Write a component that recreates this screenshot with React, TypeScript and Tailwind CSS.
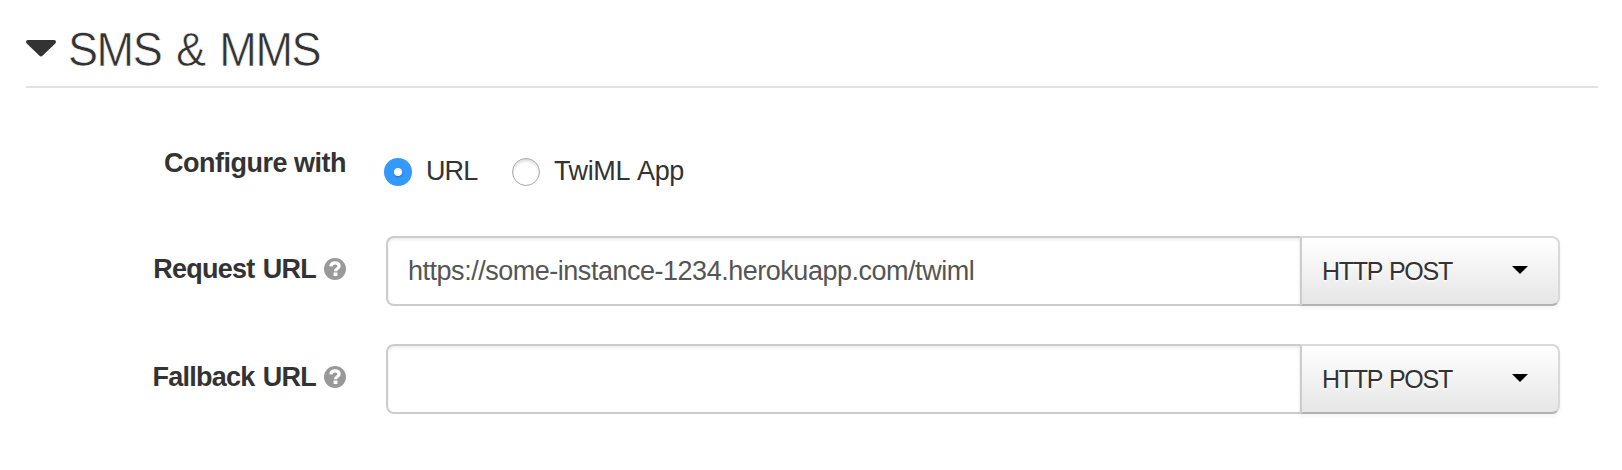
import React from "react";

const Help = () => (
  <svg className="ml-2 size-[22px] shrink-0" viewBox="0 0 22 22">
    <circle cx="11" cy="11" r="11" fill="#999" />
    <path
      d="M6.9 8.3C7.1 5.7 8.8 4.8 11.1 4.8c2.300 0 4 1.200 4 3.200 0 2.900-3.600 2.700-3.600 5.300"
      fill="none"
      stroke="#fff"
      strokeWidth="3.2"
    />
    <rect x="9.6" y="14.5" width="3.8" height="3.5" fill="#fff" />
  </svg>
);

const FieldRow = ({ label, value }: { label: string; value: string }) => (
  <div className="flex h-[70px]">
    <div className="flex h-[66px] w-[346px] shrink-0 items-center justify-end">
      <span className="text-[27px] leading-8 font-bold tracking-[-0.75px] whitespace-nowrap [word-spacing:1.5px]">{label}</span>
      <Help />
    </div>
    <input
      readOnly
      value={value}
      className="ml-10 h-[70px] w-[914px] shrink-0 rounded-l-[8px] border-2 border-r-0 border-[#ccc] bg-white pr-4 pl-5 text-[27px] tracking-[-0.48px] text-[#555] shadow-[inset_0_2px_3px_rgba(0,0,0,0.07)] outline-none"
    />
    <button className="flex h-[70px] w-[260px] shrink-0 items-center justify-between rounded-r-[8px] border-2 border-[#d9d9d9] border-b-[#b3b3b3] border-l-[#ccc] bg-linear-to-b from-white to-[#e6e6e6] pr-[30px] pl-5 text-[25px] text-[#333] shadow-[0_2px_4px_rgba(0,0,0,0.05)]">
      <span className="pt-px tracking-[-1.25px] whitespace-nowrap [text-shadow:0_2px_2px_rgba(255,255,255,0.75)] [word-spacing:1.4px]">HTTP POST</span>
      <svg className="mb-0.5 h-2 w-4" viewBox="0 0 16 8">
        <path d="M0 0h16L8 8z" fill="#000" />
      </svg>
    </button>
  </div>
);

export default function App() {
  return (
    <main className="h-[470px] w-[1622px] overflow-hidden bg-white font-['Liberation_Sans',sans-serif] text-[#333]">
      <header className="ml-[26px] flex h-[88px] w-[1572px] items-start border-b-2 border-[#e2e2e2]">
        <svg className="mt-[39px] h-[18px] w-[30px]" viewBox="0 0 30 18">
          <path d="M2 1h26q2 0 2 1.8 0 1-1 2L16.5 16.8q-1.5 1.3-3 0L1 4.8Q0 3.8 0 2.8 0 1 2 1z" fill="#333" />
        </svg>
        <h1 className="mt-[21px] ml-[12px] origin-left scale-x-[0.92] text-[49px] leading-[56px] font-normal tracking-[-1.6px] whitespace-nowrap [-webkit-text-stroke:0.6px_white] [word-spacing:4px]">
          SMS &amp; MMS
        </h1>
      </header>
      <div className="mt-[60px] flex h-[48px]">
        <div className="mt-[-1px] w-[346px] shrink-0 text-right text-[27px] leading-8 font-bold tracking-[-0.5px]">Configure with</div>
        <div className="ml-[38px] flex h-12 items-center">
          <span className="flex size-7 items-center justify-center rounded-full bg-[#39f]">
            <span className="size-2 rounded-full bg-white shadow-[0_1px_2px_rgba(0,0,0,0.3)]" />
          </span>
          <span className="mb-0.5 ml-[14px] w-[86px] text-[27px] leading-8 tracking-[-0.9px]">URL</span>
          <span className="size-7 rounded-full border border-[#aaa] shadow-[inset_0_2px_3px_rgba(0,0,0,0.15)]" />
          <span className="mb-0.5 ml-[14px] text-[27px] leading-8 tracking-[-0.4px] whitespace-nowrap [word-spacing:2.5px]">TwiML App</span>
        </div>
      </div>
      <div className="mt-10 flex flex-col gap-[38px]">
        <FieldRow label="Request URL" value="https://some-instance-1234.herokuapp.com/twiml" />
        <FieldRow label="Fallback URL" value="" />
      </div>
    </main>
  );
}
